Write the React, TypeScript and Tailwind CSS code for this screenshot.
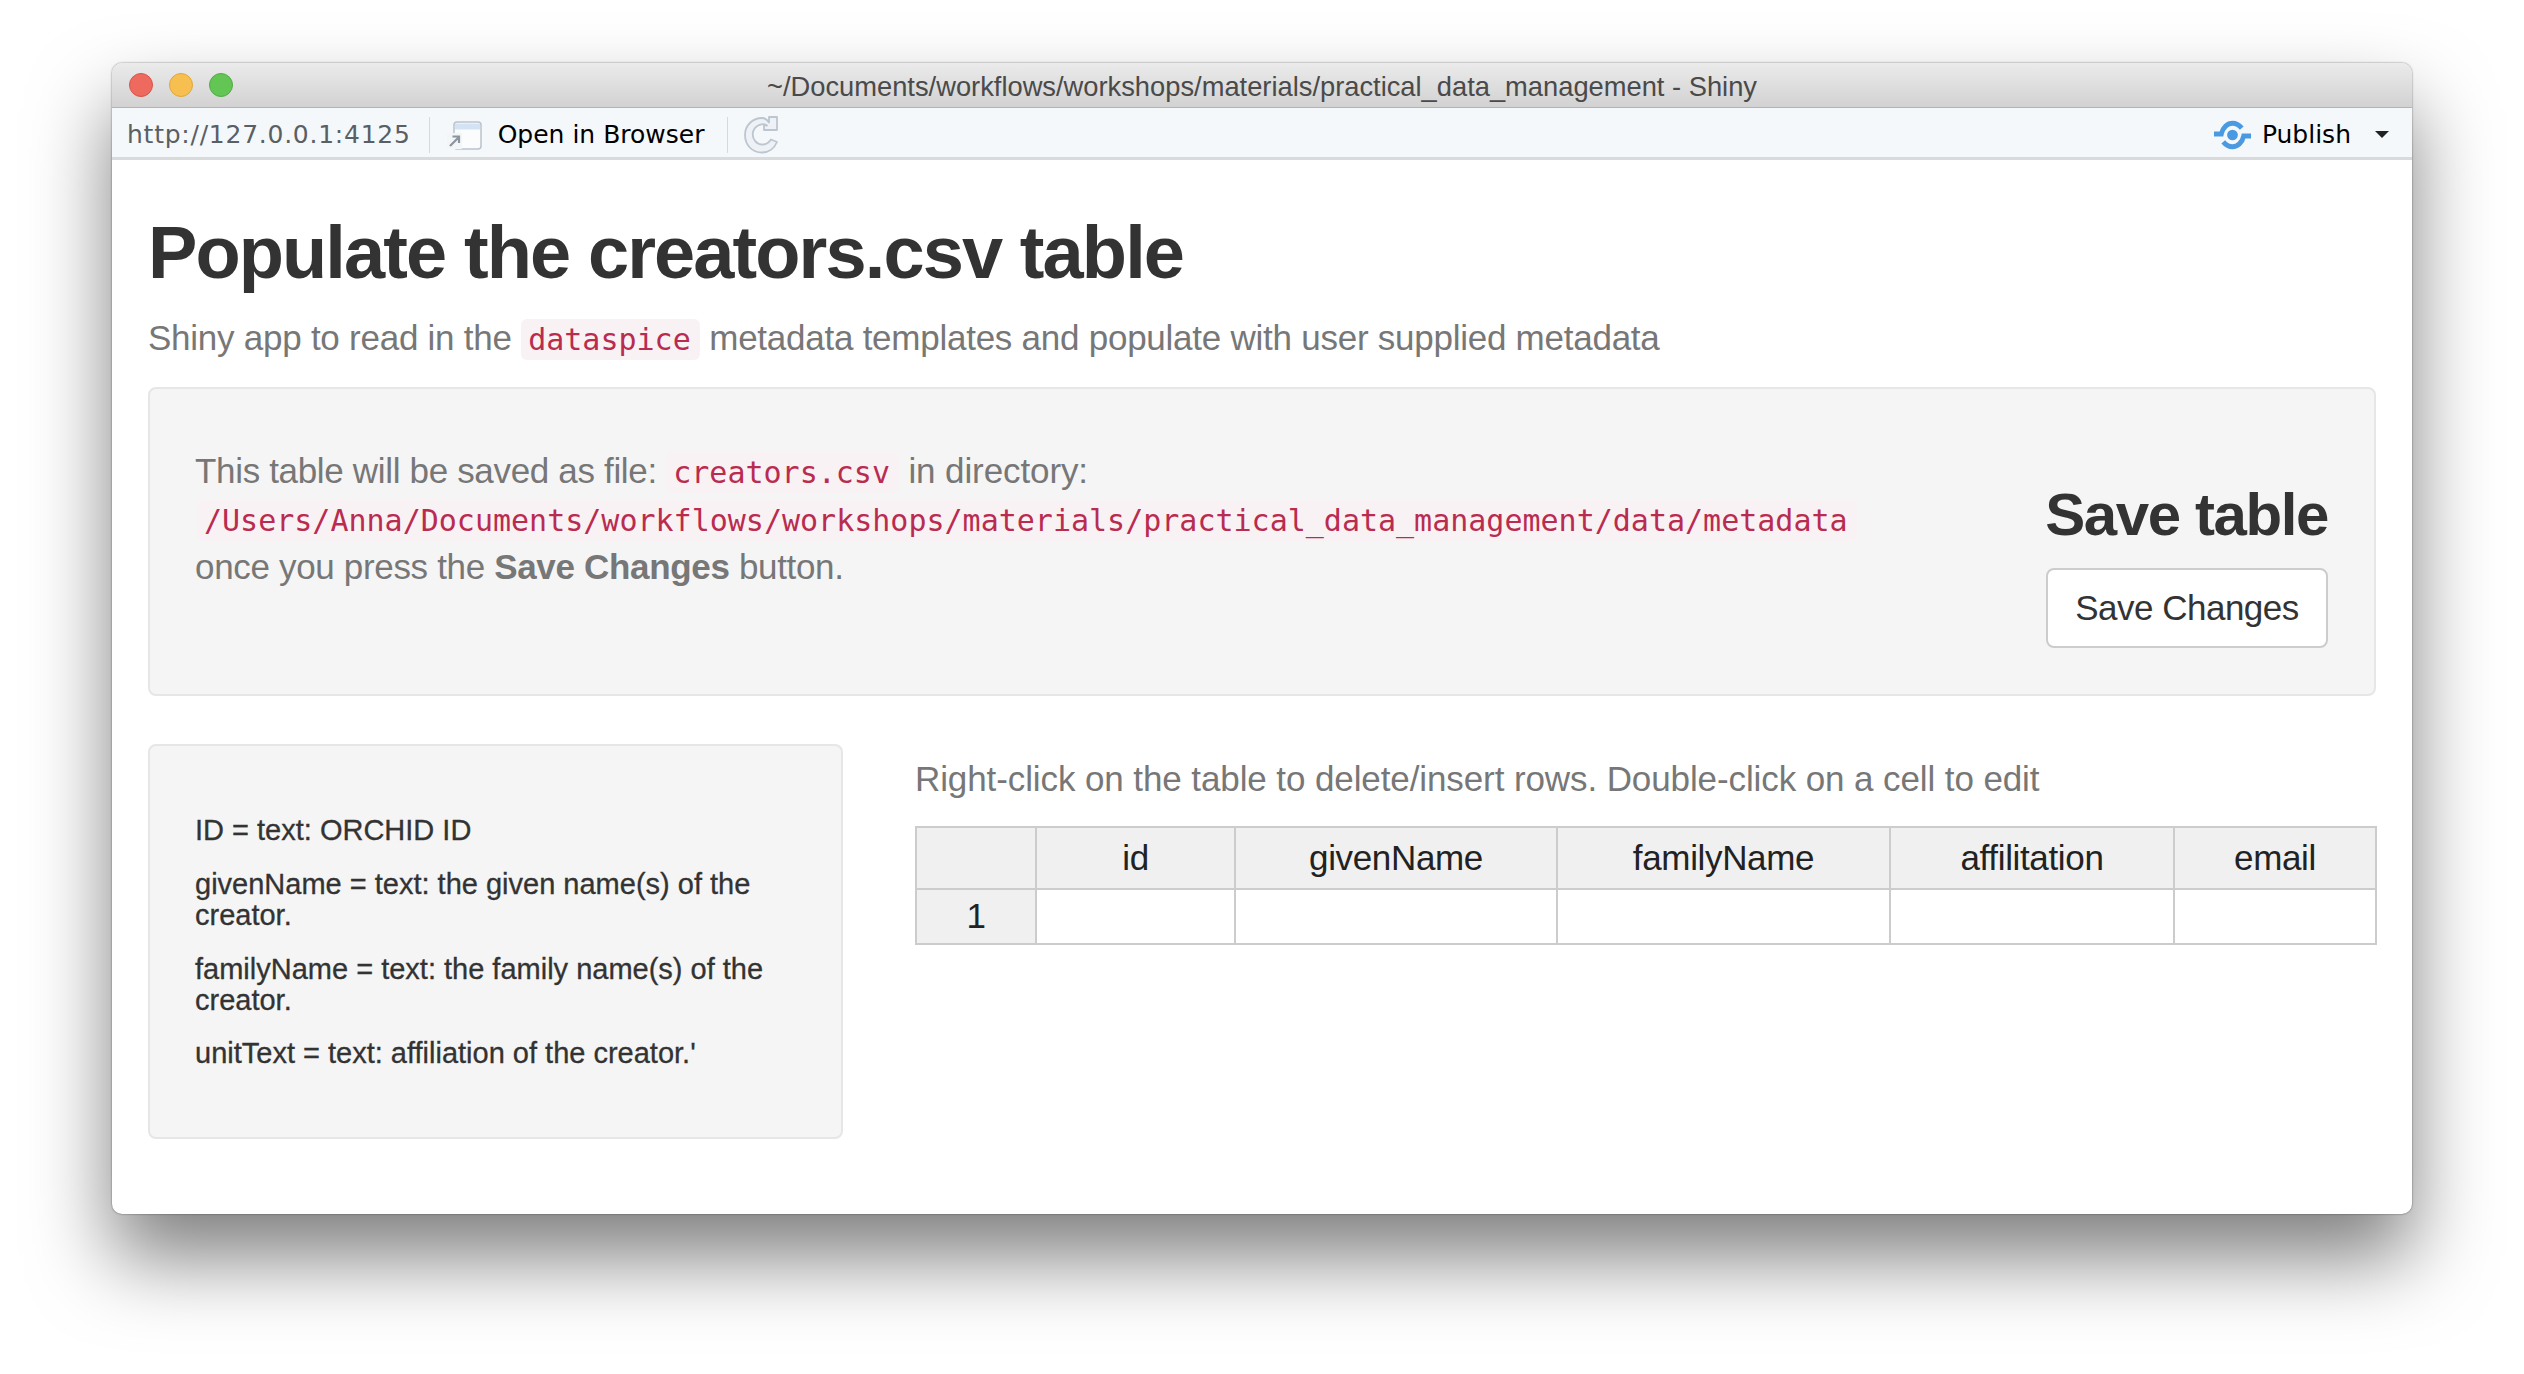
const SANS = "font-['Liberation_Sans',Arial,sans-serif]";

function OpenIcon() {
  return (
    <svg width="38" height="32" viewBox="0 0 38 32" fill="none">
      <rect x="9" y="3" width="27" height="27" rx="3" fill="#fbfcfd" stroke="#b9c3cc" strokeWidth="1.5" />
      <path d="M10 4.500h25v6H10z" fill="#d3e3f3" />
      <rect x="2" y="14" width="15" height="16" fill="#f3f6f8" />
      <path d="M5 27l8-8M7.500 17.500h6.500v6.500" stroke="#8b949c" strokeWidth="2.200" fill="none" />
    </svg>
  );
}

function RefreshIcon() {
  return (
    <svg width="36" height="40" viewBox="0 0 36 40" fill="none">
      <path
        d="M26 7.500V2l8 0v13H21v-5l3 .5C21 8 12 9 10 17c-1.500 7 4 13 10 12.500 4-.3 6.500-2.500 8-5l6 2.500c-2.500 6-8 10.500-15 10.500C9 37.500 2 30 2 20 2 10 10 3 19 3c3 0 5 1.500 7 4.500z"
        fill="#eef2f6"
        stroke="#bcc6d0"
        strokeWidth="1.800"
        strokeLinejoin="round"
      />
    </svg>
  );
}

function PublishIcon() {
  return (
    <svg width="39" height="30" viewBox="0 0 40 30" fill="none">
      <circle cx="20" cy="15" r="5.500" fill="#4a9ae2" />
      <path d="M1 14h7.500C10 7 15 3 20 3c4 0 7 2 9.500 5" stroke="#4a9ae2" strokeWidth="5" />
      <path d="M39 16h-7.500C30 23 25 27 20 27c-4 0-7-2-9.500-5" stroke="#4a9ae2" strokeWidth="5" />
    </svg>
  );
}

function Code({ children }: { children: React.ReactNode }) {
  return (
    <code className="font-['DejaVu_Sans_Mono',monospace] text-[30px] tracking-normal text-[#b92c50] bg-[#f9f2f4] rounded-[6px] pl-[7px] pr-[9px] py-[3px]">
      {children}
    </code>
  );
}

const columns = [
  { name: "", width: "w-[120px]" },
  { name: "id", width: "w-[199px]" },
  { name: "givenName", width: "w-[322px]" },
  { name: "familyName", width: "w-[333px]" },
  { name: "affilitation", width: "w-[284px]" },
  { name: "email", width: "w-[202px]" },
];

export default function App() {
  return (
    <div className={`${SANS} min-h-screen bg-white pt-[63px] px-[112px] pb-[160px]`}>
      <div className="w-[2300px] h-[1151px] flex flex-col bg-white rounded-[10px] overflow-hidden shadow-[0_44px_80px_rgba(0,0,0,0.5),0_0_2px_rgba(0,0,0,0.55)]">
        {/* title bar */}
        <div className="relative h-[45px] shrink-0 flex items-center justify-center bg-gradient-to-b from-[#ebebeb] to-[#d2d2d2] border-b border-[#b4b4b4]">
          <div className="absolute left-[17px] top-[10px] flex gap-[16px]">
            <div className="w-[24px] h-[24px] rounded-full bg-[#ee6a5f] border border-[#d9534a]" />
            <div className="w-[24px] h-[24px] rounded-full bg-[#f7bf4f] border border-[#e0a63c]" />
            <div className="w-[24px] h-[24px] rounded-full bg-[#62c554] border border-[#52ac46]" />
          </div>
          <span className="pt-[4px] text-[27.3px] text-[#4a4a4a]">
            ~/Documents/workflows/workshops/materials/practical_data_management - Shiny
          </span>
        </div>

        {/* toolbar */}
        <div className="h-[52px] shrink-0 flex items-center pt-[4px] bg-[#f4f8fa] border-b-[3px] border-[#d8dadc] font-['DejaVu_Sans',sans-serif] text-[25px]">
          <span className="ml-[15px] tracking-[0.75px] text-[#5a5f63]">http://127.0.0.1:4125</span>
          <div className="ml-[18px] w-px h-[36px] bg-[#d5dade]" />
          <div className="ml-[15px]">
            <OpenIcon />
          </div>
          <span className="ml-[15px] text-black">Open in Browser</span>
          <div className="ml-[23px] w-px h-[36px] bg-[#d5dade]" />
          <div className="ml-[15px]">
            <RefreshIcon />
          </div>
          <div className="ml-auto flex items-center">
            <PublishIcon />
            <span className="ml-[10px] text-black">Publish</span>
            <div className="ml-[24px] mr-[23px] w-0 h-0 border-x-[7px] border-x-transparent border-t-[7px] border-t-[#222]" />
          </div>
        </div>

        {/* page */}
        <div className="flex-1 px-[36px]">
          <h1 className="mt-[48px] text-[74px] leading-[90px] tracking-[-1.9px] font-bold text-[#333]">
            Populate the creators.csv table
          </h1>
          <p className="mt-[16px] h-[48px] text-[35px] leading-[48px] tracking-[-0.25px] text-[#777]">
            Shiny app to read in the <Code>dataspice</Code> metadata templates and populate with user supplied metadata
          </p>

          <div className="mt-[25px] h-[309px] flex justify-between bg-[#f5f5f5] border-2 border-[#e6e6e6] rounded-[8px] pl-[45px] pr-[46px]">
            <div className="pt-[58px] text-[35px] leading-[48px] tracking-[-0.33px] text-[#777]">
              <div className="h-[48px]">
                This table will be saved as file: <Code>creators.csv</Code> <span className="tracking-[-0.1px]">in directory:</span>
              </div>
              <div className="h-[48px] pl-[2px]">
                <Code>/Users/Anna/Documents/workflows/workshops/materials/practical_data_management/data/metadata</Code>
              </div>
              <div className="h-[48px]">
                once you press the <b>Save Changes</b> button.
              </div>
            </div>
            <div className="pt-[93px] flex flex-col items-end">
              <h3 className="text-[60px] leading-[66px] tracking-[-1.4px] font-bold text-[#333]">Save table</h3>
              <button className="mt-[20px] w-[282px] h-[80px] text-[35px] tracking-[-0.5px] text-[#333] bg-white border-2 border-[#ccc] rounded-[8px]">
                Save Changes
              </button>
            </div>
          </div>

          <div className="mt-[48px] flex items-start">
            <div className="w-[695px] h-[395px] shrink-0 bg-[#f5f5f5] border-2 border-[#e6e6e6] rounded-[8px] pl-[45px] pr-[40px] pt-[69px] text-[29px] leading-[31px] text-[#333] [-webkit-text-stroke:0.3px_#333]">
              <p>ID = text: ORCHID ID</p>
              <p className="mt-[23px]">givenName = text: the given name(s) of the creator.</p>
              <p className="mt-[23px]">familyName = text: the family name(s) of the creator.</p>
              <p className="mt-[22px]">unitText = text: affiliation of the creator.'</p>
            </div>
            <div className="ml-[72px] flex-1">
              <p className="mt-[11px] h-[48px] text-[35px] leading-[48px] tracking-[-0.1px] text-[#777]">
                Right-click on the table to delete/insert rows. Double-click on a cell to edit
              </p>
              <table className="mt-[23px] w-[1460px] table-fixed border-collapse text-[35px] tracking-[-0.35px] text-[#222]">
                <thead>
                  <tr className="h-[62px] bg-[#f0f0f0]">
                    {columns.map((c) => (
                      <th key={c.name} className={`${c.width} border-2 border-[#ccc] font-normal`}>
                        {c.name}
                      </th>
                    ))}
                  </tr>
                </thead>
                <tbody>
                  <tr className="h-[55px]">
                    <td className="border-2 border-[#ccc] bg-[#f0f0f0] text-center">1</td>
                    <td className="border-2 border-[#ccc]" />
                    <td className="border-2 border-[#ccc]" />
                    <td className="border-2 border-[#ccc]" />
                    <td className="border-2 border-[#ccc]" />
                    <td className="border-2 border-[#ccc]" />
                  </tr>
                </tbody>
              </table>
            </div>
          </div>
        </div>
      </div>
    </div>
  );
}
